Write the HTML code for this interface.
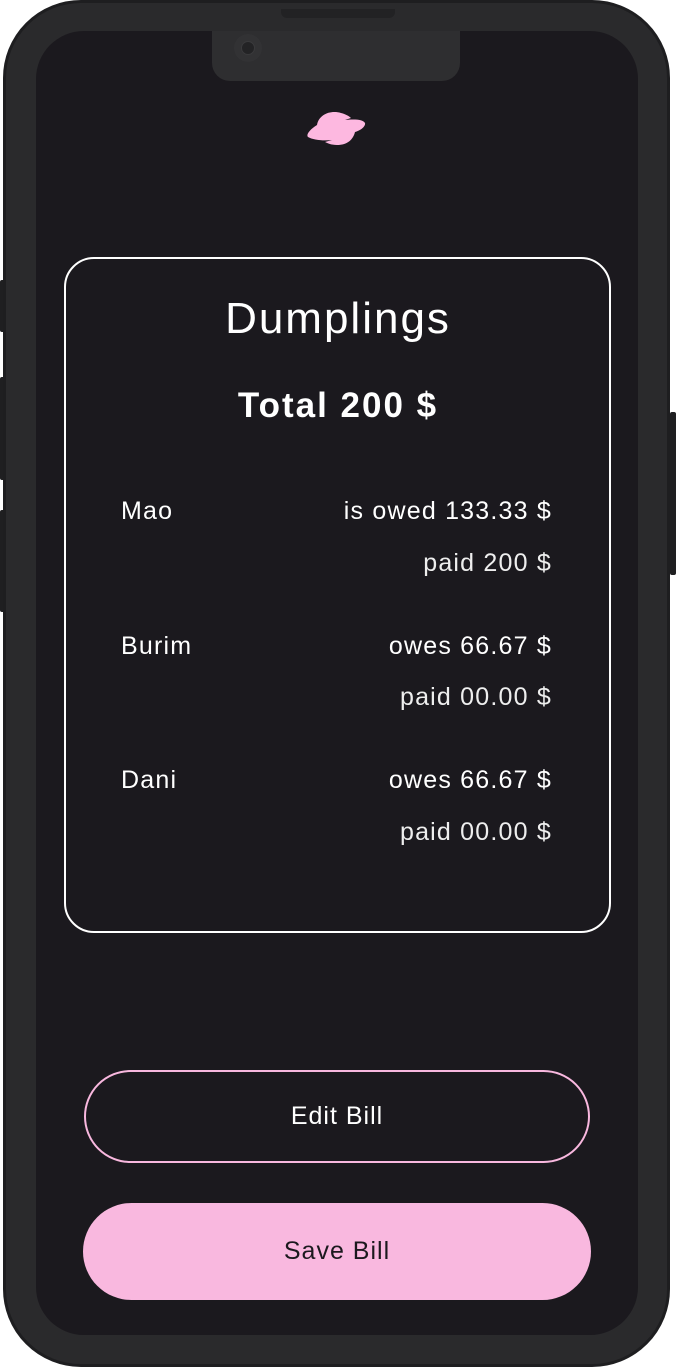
<!DOCTYPE html>
<html><head><style>
*{margin:0;padding:0;box-sizing:border-box}
body{width:676px;height:1367px;background:#fff;position:relative;overflow:hidden;font-family:"Liberation Sans",sans-serif}
.btn{position:absolute;background:#1f1f21;border-radius:2px}
.phone{position:absolute;left:3px;top:0;width:667px;height:1367px;border-radius:78px;background:#2a2a2c;border:3px solid #1e1e20}
.screen{position:absolute;left:36px;top:31px;width:602px;height:1304px;border-radius:48px;background:#1b191e;overflow:hidden}
.notch{position:absolute;left:176px;top:0;width:248px;height:50px;background:#2e2e30;border-radius:0 0 18px 18px}
.cam{position:absolute;left:22px;top:3px;width:28px;height:28px;border-radius:50%;background:#323234}
.cam i{position:absolute;left:7px;top:7px;width:14px;height:14px;border-radius:50%;background:#232325;border:1px solid #3a3a3c}
.speaker{position:absolute;left:281px;top:9px;width:114px;height:9px;background:#222224;border-radius:0 0 6px 6px}
.card{position:absolute;left:64px;top:257px;width:547px;height:676px;border:2px solid #fff;border-radius:30px}
.t{position:absolute;color:#fff;white-space:nowrap;letter-spacing:1.2px}
.c{left:0;width:676px;text-align:center}
.r{right:124px;text-align:right}
.edit{position:absolute;left:84px;top:1070px;width:506px;height:93px;border:2.5px solid #f9b8df;border-radius:47px;color:#fff;font-size:25px;text-align:center;line-height:88px;letter-spacing:1px}
.save{position:absolute;left:83px;top:1203px;width:508px;height:97px;background:#f9b8df;border-radius:49px;color:#1b191e;font-size:25px;text-align:center;line-height:97px;letter-spacing:1px}
</style></head><body>
<div class="btn" style="left:0;top:280px;width:5px;height:52px"></div>
<div class="btn" style="left:0;top:377px;width:5px;height:103px"></div>
<div class="btn" style="left:0;top:510px;width:5px;height:102px"></div>
<div class="btn" style="left:670px;top:412px;width:6px;height:163px"></div>
<div class="phone"></div>
<div class="screen"><div class="notch"><div class="cam"><i></i></div></div></div>
<div class="speaker"></div>
<svg style="position:absolute;left:305px;top:108px" width="62" height="45" viewBox="0 0 62 45">
<path d="M12 17 C14 6 26 2 36 5 C40 6 44 8 46 10 L40 12 C48 11 58 11 60 15 C61 19 54 23 50 24 C48 32 42 37 32 37 C26 37 22 35 20 34 L27 32 C18 33 8 32 3 29 C1 27 4 22 12 17Z" fill="#fdb8e0"/>
</svg>
<div class="card"></div>
<div class="t c" style="top:294px;font-size:44px;letter-spacing:2px">Dumplings</div>
<div class="t c" style="top:386px;font-size:35px;letter-spacing:2px;font-weight:bold">Total 200 $</div>
<div class="t" style="left:121px;top:497px;font-size:25px">Mao</div>
<div class="t r" style="top:497px;font-size:25px">is owed 133.33 $</div>
<div class="t r" style="top:549px;font-size:25px;color:#eee">paid 200 $</div>
<div class="t" style="left:121px;top:632px;font-size:25px">Burim</div>
<div class="t r" style="top:632px;font-size:25px">owes 66.67 $</div>
<div class="t r" style="top:683px;font-size:25px;color:#eee">paid 00.00 $</div>
<div class="t" style="left:121px;top:766px;font-size:25px">Dani</div>
<div class="t r" style="top:766px;font-size:25px">owes 66.67 $</div>
<div class="t r" style="top:818px;font-size:25px;color:#eee">paid 00.00 $</div>
<div class="edit">Edit Bill</div>
<div class="save">Save Bill</div>
</body></html>
